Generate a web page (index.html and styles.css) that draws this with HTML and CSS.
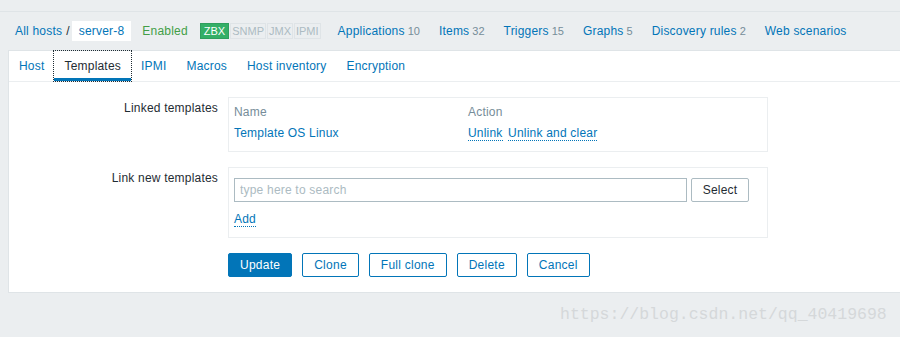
FILE: index.html
```html
<!DOCTYPE html>
<html lang="en">
  <head>
    <meta charset="UTF-8" />
    <meta name="viewport" content="width=device-width, initial-scale=1.0" />
    <title>Hosts - Templates</title>
    <link rel="stylesheet" href="styles.css">
  </head>
  <body>
    <div class="top-strip"></div>

    <ul class="host-nav">
      <li class="crumb"><a href="#">All hosts</a></li>
      <li class="crumb-sep">/</li>
      <li class="crumb selected"><a href="#">server-8</a></li>
      <li class="status"><a href="#" class="green">Enabled</a></li>
      <li class="badges">
        <span class="badge badge-green">ZBX</span>
        <span class="badge badge-grey">SNMP</span>
        <span class="badge badge-grey">JMX</span>
        <span class="badge badge-grey">IPMI</span>
      </li>
      <li class="nav-link first"><a href="#">Applications</a><span class="count">10</span></li>
      <li class="nav-link"><a href="#">Items</a><span class="count">32</span></li>
      <li class="nav-link"><a href="#">Triggers</a><span class="count">15</span></li>
      <li class="nav-link"><a href="#">Graphs</a><span class="count">5</span></li>
      <li class="nav-link"><a href="#">Discovery rules</a><span class="count">2</span></li>
      <li class="nav-link"><a href="#">Web scenarios</a></li>
    </ul>

    <div class="panel">
      <ul class="tabs">
        <li><a href="#">Host</a></li>
        <li class="active"><a href="#">Templates</a></li>
        <li><a href="#">IPMI</a></li>
        <li><a href="#">Macros</a></li>
        <li><a href="#">Host inventory</a></li>
        <li><a href="#">Encryption</a></li>
      </ul>

      <div class="form-grid">
        <label class="form-label">Linked templates</label>
        <div class="form-box linked">
          <table class="list">
            <tr>
              <th class="col-name">Name</th>
              <th>Action</th>
            </tr>
            <tr>
              <td><a href="#">Template OS Linux</a></td>
              <td>
                <a href="#" class="dotted">Unlink</a>
                <a href="#" class="dotted">Unlink and clear</a>
              </td>
            </tr>
          </table>
        </div>

        <label class="form-label">Link new templates</label>
        <div class="form-box link-new">
          <div class="search-row">
            <input type="text" class="search-input" placeholder="type here to search" />
            <button class="btn-grey">Select</button>
          </div>
          <a href="#" class="dotted add-link">Add</a>
        </div>

        <div class="form-buttons">
          <button class="btn-main">Update</button>
          <button class="btn-alt">Clone</button>
          <button class="btn-alt">Full clone</button>
          <button class="btn-alt">Delete</button>
          <button class="btn-alt">Cancel</button>
        </div>
      </div>
    </div>

    <div class="watermark">https://blog.csdn.net/qq_40419698</div>
  </body>
</html>
```

FILE: styles.css
```css
body {
  font-family: "Liberation Sans", Arial, sans-serif;
  font-size: 12px;
  letter-spacing: 0.2px;
  margin: 0;
  padding: 0;
  background: #ebeef0;
  color: #1f2c33;
  position: relative;
  min-height: 337px;
  overflow: hidden;
}

a {
  color: #0275b8;
  text-decoration: none;
}

ul {
  list-style: none;
  margin: 0;
  padding: 0;
}

.top-strip {
  height: 11px;
  border-bottom: 1px solid #dfe4e7;
}

/* host navigation */
.host-nav {
  display: flex;
  align-items: center;
  height: 38px;
  padding-left: 15px;
  white-space: nowrap;
}

.crumb-sep {
  padding: 0 2px 0 4px;
  color: #1f2c33;
}

.crumb.selected {
  background: #fff;
  height: 20px;
  line-height: 20px;
  padding: 0 7px;
}

.status {
  margin-left: 11px;
}

.green {
  color: #429e47;
}

.badges {
  display: flex;
  gap: 1px;
  margin-left: 12px;
  letter-spacing: 0;
}

.badge {
  display: inline-block;
  font-size: 11px;
  line-height: 14px;
  padding: 0 1px;
  border: 1px solid;
}

.badge-green {
  background: #34af67;
  border-color: #2f9f5e;
  color: #fff;
  padding: 0 3px;
}

.badge-grey {
  background: #ebeef0;
  border-color: #dfe4e7;
  color: #acbbc2;
}

.nav-link {
  margin-left: 19px;
}

.nav-link.first {
  margin-left: 17px;
}

.count {
  color: #768d99;
  font-size: 11px;
  margin-left: 3px;
  letter-spacing: 0;
}

/* panel */
.panel {
  background: #fff;
  margin-left: 8px;
  border: 1px solid #dfe4e7;
  border-right: none;
  padding-bottom: 15px;
}

.tabs {
  display: flex;
  height: 30px;
  border-bottom: 1px solid #ebeef0;
}

.tabs li {
  display: flex;
  align-items: center;
  padding: 0 10px;
  box-sizing: border-box;
  border-bottom: 3px solid transparent;
  padding-top: 2px;
}

.tabs li.active {
  border-bottom-color: #0275b8;
  outline: 1px dotted #1f2c33;
}

.tabs li.active a {
  color: #1f2c33;
}

/* form */
.form-grid {
  display: grid;
  grid-template-columns: 209px 540px;
  column-gap: 10px;
  row-gap: 15px;
  padding-top: 15px;
}

.form-label {
  text-align: right;
  padding-top: 4px;
  line-height: 14px;
}

.form-box {
  border: 1px solid #ebeef0;
}

.linked {
  padding: 3px 5px 8px;
}

.list {
  width: 100%;
  border-collapse: collapse;
}

.list th,
.list td {
  text-align: left;
  font-weight: normal;
  padding: 0;
  height: 21px;
  line-height: 14px;
}

.list th {
  color: #768d99;
}

.col-name {
  width: 234px;
}

.dotted {
  border-bottom: 1px dotted #0275b8;
  margin-right: 2px;
}

.link-new {
  padding: 10px 5px 10px;
}

.search-row {
  display: flex;
  gap: 4px;
  height: 24px;
}

.search-input {
  width: 453px;
  box-sizing: border-box;
  height: 24px;
  border: 1px solid #acbbc2;
  padding: 0 5px;
  font-family: "Liberation Sans", Arial, sans-serif;
  font-size: 12px;
  letter-spacing: 0.2px;
  color: #1f2c33;
  margin: 0;
}

.search-input::placeholder {
  color: #acbbc2;
}

.btn-grey {
  height: 24px;
  width: 58px;
  background: #fff;
  border: 1px solid #acbbc2;
  border-radius: 2px;
  color: #1f2c33;
  font-family: "Liberation Sans", Arial, sans-serif;
  font-size: 12px;
  letter-spacing: 0.2px;
  padding: 0;
}

.add-link {
  display: inline-block;
  margin-top: 10px;
  line-height: 14px;
}

.form-buttons {
  grid-column: 2;
  display: flex;
  gap: 10px;
}

.btn-main,
.btn-alt {
  height: 24px;
  padding: 0 11px;
  border: 1px solid #0275b8;
  border-radius: 2px;
  font-family: "Liberation Sans", Arial, sans-serif;
  font-size: 12px;
  letter-spacing: 0.25px;
}

.btn-main {
  background: #0275b8;
  color: #fff;
}

.btn-alt {
  background: #fff;
  color: #0275b8;
}

/* blog watermark over the page */
.watermark {
  position: absolute;
  left: 560px;
  top: 305px;
  font-family: "Liberation Mono", monospace;
  font-size: 16.5px;
  letter-spacing: 0;
  color: #d5d8da;
}
```
